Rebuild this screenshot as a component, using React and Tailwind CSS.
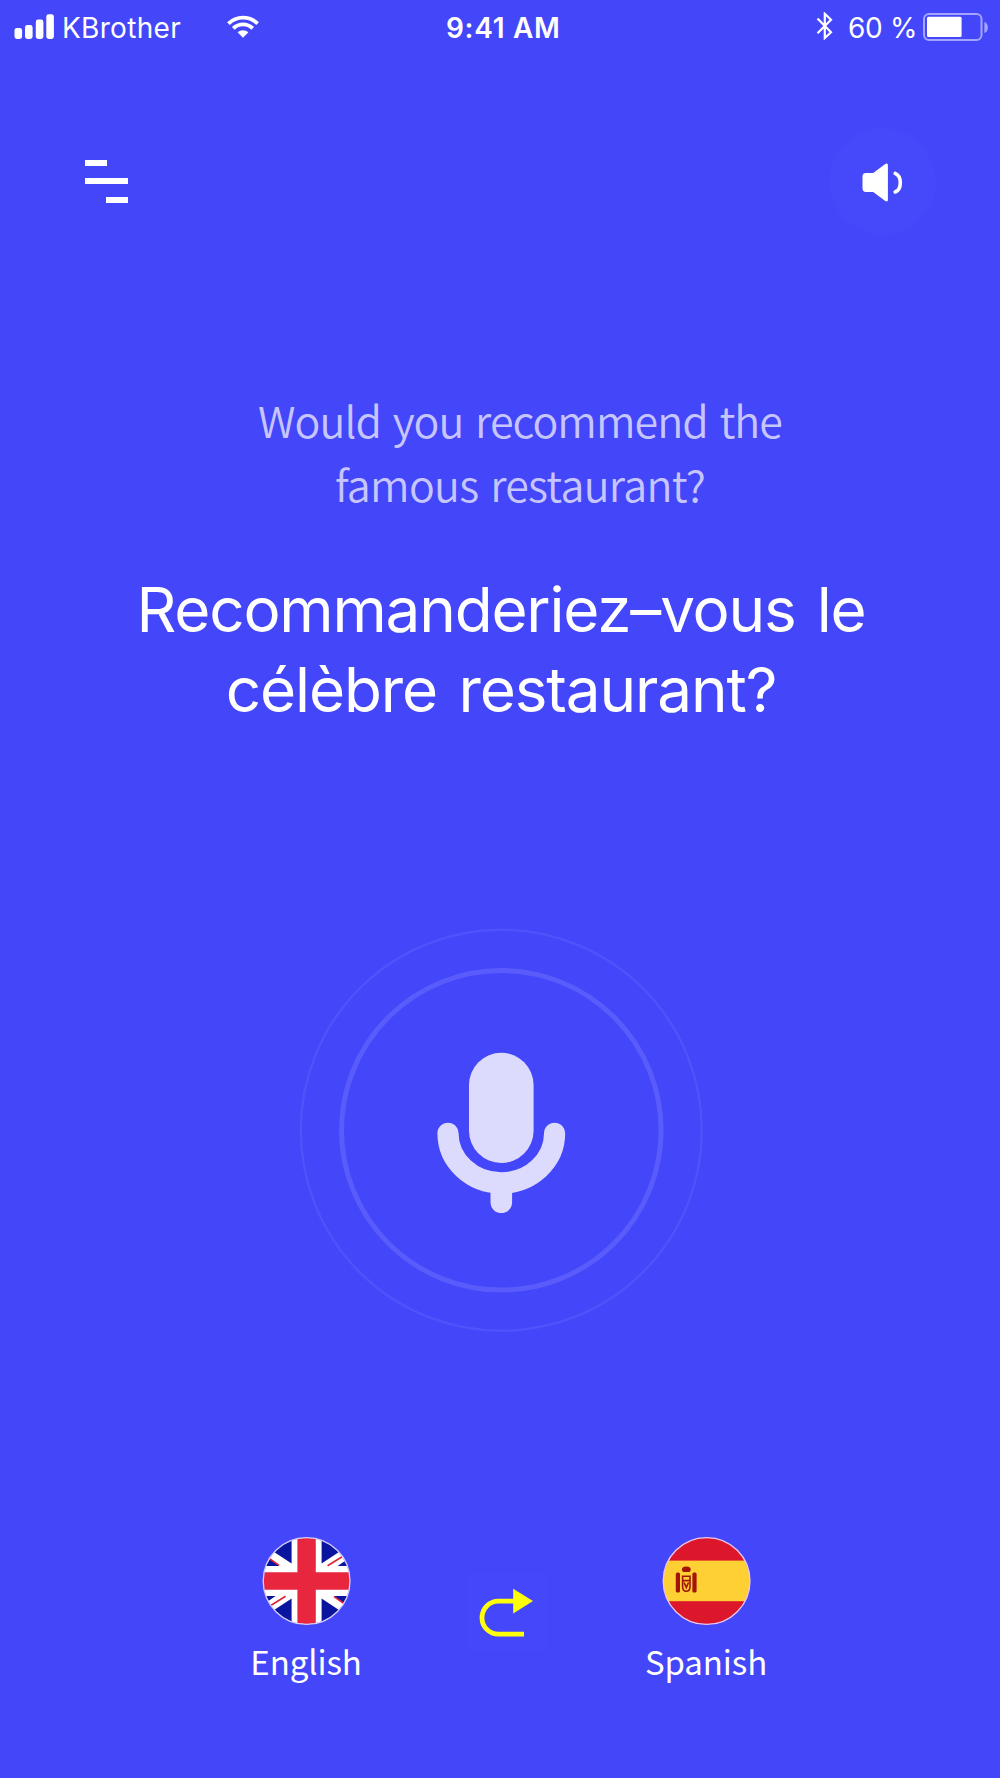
import React from "react";

const INTER = "font-['Inter',sans-serif]";

function SignalIcon() {
  return (
    <svg width="41" height="26" viewBox="0 0 41 26" fill="#fff">
      <rect x="0.5" y="14" width="7.6" height="11" rx="2.4" />
      <rect x="11" y="11" width="7.6" height="14" rx="2.4" />
      <rect x="21.8" y="5.5" width="7.6" height="19.5" rx="2.4" />
      <rect x="32.3" y="0.3" width="7.6" height="24.7" rx="2.4" />
    </svg>
  );
}

function WifiIcon() {
  return (
    <svg width="32" height="24" viewBox="0 0 32 24" fill="none" stroke="#fff" strokeWidth="3.8">
      <path d="M1.4 8.6a20.6 20.6 0 0 1 29.2 0" />
      <path d="M6.3 13.4a13.7 13.7 0 0 1 19.4 0" />
      <path d="M10.6 17.3a7.8 7.8 0 0 1 10.8 0L16 22.7z" fill="#fff" stroke="none" />
    </svg>
  );
}

function BluetoothIcon() {
  return (
    <svg width="18" height="28" viewBox="0 0 18 28" fill="none" stroke="#fff" strokeWidth="2.2">
      <path d="M1.5 6.5 15 20.3 8.8 26V1.8L15 7.8 1.5 21.3" />
    </svg>
  );
}

function BatteryIcon() {
  return (
    <svg width="67" height="30" viewBox="0 0 67 30">
      <rect x="2" y="2" width="57.5" height="26" rx="5" fill="none" stroke="#a3a4fc" strokeWidth="2" />
      <rect x="5" y="4.7" width="34.6" height="20.4" rx="1.5" fill="#fff" />
      <path d="M62.4 10c4.6 1.4 4.6 9.6 0 11z" fill="#a3a4fc" />
    </svg>
  );
}

function StatusBar() {
  return (
    <div className={`flex h-[54px] w-full items-center pl-[14px] text-[28px] leading-[54px] text-white ${INTER}`}>
      <div className="w-[48px]"><SignalIcon /></div>
      <span className="w-[165px] pt-px tracking-[0.3px]">KBrother</span>
      <div className="w-[219px]"><WifiIcon /></div>
      <span className="w-[370px] pt-px font-semibold tracking-[0.7px]">9:41 AM</span>
      <div className="w-[32px] pb-[2px]"><BluetoothIcon /></div>
      <span className="w-[74px] pt-[2px] tracking-[-0.3px]">60 %</span>
      <BatteryIcon />
    </div>
  );
}

function Header() {
  return (
    <header className="mt-[74px] flex h-[107px] items-center justify-between pr-[64px] pl-[85px]">
      <button className="flex w-[43px] flex-col" aria-label="Menu">
        <span className="h-[6px] w-[22px] bg-white" />
        <span className="mt-[12px] h-[6px] w-[43px] bg-white" />
        <span className="mt-[13px] h-[6px] w-[22px] self-end bg-white" />
      </button>
      <button className="grid size-[107px] place-items-center rounded-full bg-[#4649fa]" aria-label="Sound">
        <svg width="42" height="40" viewBox="0 0 42 40">
          <path d="M4 11h7.2L23.3 2q2.6-1.4 2.6 1.2v34.6q0 2.6-2.6 1.2L11.2 30H4Q.5 30 .5 26.6V14.4Q.5 11 4 11z" fill="#fff" />
          <path d="M33.2 11.4c6.8 3 6.8 15.5 0 18.6" fill="none" stroke="#fff" strokeWidth="3.6" strokeLinecap="round" />
        </svg>
      </button>
    </header>
  );
}

function Microphone() {
  return (
    <svg width="406" height="406" viewBox="-203.3 -203.3 406 406" fill="none">
      <circle r="200.5" stroke="#5053fb" strokeWidth="2.4" />
      <circle r="159.8" stroke="#595cfb" strokeWidth="5" />
      <rect x="-32.3" y="-77.6" width="64.6" height="110.3" rx="32.3" fill="#dcdbfd" />
      <path d="M-53.3 3A53.3 49.6 0 0 0 53.3 3" stroke="#dcdbfd" strokeWidth="21.2" strokeLinecap="round" />
      <path d="M0 58v14" stroke="#dcdbfd" strokeWidth="21.6" strokeLinecap="round" />
    </svg>
  );
}

function UkFlag() {
  return (
    <svg width="90" height="90" viewBox="-45.6 -45 90 90">
      <clipPath id="uk"><circle r="43.3" /></clipPath>
      <g clipPath="url(#uk)">
        <rect x="-45" y="-45" width="90" height="90" fill="#fff" />
        <g id="half">
          <path d="M-15-50v32.5L-47-38.5V-50zM-27-15l-18-13v13zM15-50v32.5L47-38.5V-50zM31-15l16-11v11z" fill="#0a159f" />
          <path d="M-38-23l10.5 7.3M35.5-24.3 21-15.3" stroke="#dc2438" strokeWidth="1.6" />
        </g>
        <use href="#half" transform="rotate(180)" />
        <path d="M-9.2-45H9.2V-8.8H45V8.8H9.2V45H-9.2V8.8H-45V-8.8H-9.2z" fill="#e8273f" />
      </g>
      <circle r="43.4" fill="none" stroke="#d5cdf8" strokeWidth="1.3" />
    </svg>
  );
}

function SpainFlag() {
  return (
    <svg width="90" height="90" viewBox="-45.6 -45 90 90">
      <clipPath id="es"><circle r="43.3" /></clipPath>
      <g clipPath="url(#es)">
        <rect x="-45" y="-45" width="90" height="90" fill="#dc172b" />
        <rect x="-45" y="-20.4" width="90" height="40.6" fill="#ffd033" />
        <g fill="#a31408">
          <rect x="-30.8" y="-8.6" width="4.2" height="20" rx="1.5" />
          <rect x="-14.2" y="-8.6" width="4.2" height="20" rx="1.5" />
          <path d="M-24.8-11q0-3.4 4.5-3.4t4.5 3.4l-1.2 2h-6.6z" />
        </g>
        <path d="M-24-4.8h7.4V5.5q0 4.8-3.7 4.8T-24 5.5z" fill="none" stroke="#a31408" strokeWidth="1.6" />
        <path d="M-24-.3h7.4M-22.5 1.5l2.2 5 2.2-5" fill="none" stroke="#a31408" strokeWidth="1.7" />
      </g>
      <circle r="43.4" fill="none" stroke="#f0c8e8" strokeWidth="1.3" />
    </svg>
  );
}

function Language({ flag, name }) {
  return (
    <div className="flex w-[140px] flex-col items-center">
      {flag}
      <span className="mt-[10px] font-['Noto_Sans_CJK_SC',sans-serif] text-[33px] leading-[50px] font-normal tracking-[-0.1px] text-white">{name}</span>
    </div>
  );
}

export default function App() {
  return (
    <main className="flex h-[1778px] w-[1000px] flex-col overflow-hidden bg-[#4346f9]">
      <StatusBar />
      <Header />
      <p className="mt-[152px] ml-[40px] text-center font-['Noto_Sans_CJK_SC',sans-serif] text-[43px] leading-[64px] font-[350] tracking-[-0.75px] text-[#c6c5fe] [word-spacing:3px]">
        <span className="tracking-[-0.95px]">Would you recommend the</span>
        <br />
        famous restaurant?
      </p>
      <h1 className={`mt-[55px] ml-[2px] text-center text-[62px] leading-[80px] font-normal tracking-[-1.3px] text-white [word-spacing:5px] ${INTER}`}>
        <span className="tracking-[-1.2px]">Recommanderiez–vous le</span>
        <br />
        <span className="tracking-[-1.1px]">célèbre restaurant?</span>
      </h1>
      <div className="mt-[197px] ml-[2px] flex justify-center">
        <Microphone />
      </div>
      <footer className="mt-[203px] flex items-start pl-[236px]">
        <Language flag={<UkFlag />} name="English" />
        <button className="mt-[36px] ml-[91px] size-[80px] bg-[#4548fa]" aria-label="Swap languages">
          <svg width="80" height="80" viewBox="0 0 80 80">
            <path d="M57 62.2H31.5a16.5 16.5 0 0 1 0-33H47" fill="none" stroke="#ffff0a" strokeWidth="4.8" />
            <path d="M46.2 16.8 66 29 46.2 41.6z" fill="#ffff0a" />
          </svg>
        </button>
        <div className="ml-[89px]">
          <Language flag={<SpainFlag />} name="Spanish" />
        </div>
      </footer>
    </main>
  );
}
